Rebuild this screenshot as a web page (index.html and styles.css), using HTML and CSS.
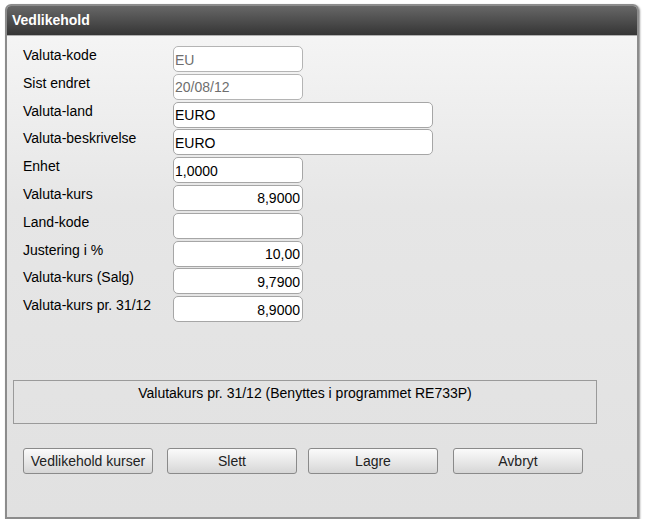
FILE: index.html
```html
<!DOCTYPE html>
<html lang="no">
<head>
<meta charset="utf-8">
<title>Vedlikehold</title>
<link rel="stylesheet" href="styles.css">
</head>
<body>
<div class="window">
  <div class="titlebar">Vedlikehold</div>
  <div class="content">
    <div class="form">
      <label class="lbl">Valuta-kode</label>
      <input class="fld disabled" type="text" value="EU" disabled>
      <label class="lbl">Sist endret</label>
      <input class="fld disabled" type="text" value="20/08/12" disabled>
      <label class="lbl">Valuta-land</label>
      <input class="fld wide" type="text" value="EURO">
      <label class="lbl">Valuta-beskrivelse</label>
      <input class="fld wide" type="text" value="EURO">
      <label class="lbl">Enhet</label>
      <input class="fld" type="text" value="1,0000">
      <label class="lbl">Valuta-kurs</label>
      <input class="fld num" type="text" value="8,9000">
      <label class="lbl">Land-kode</label>
      <input class="fld" type="text" value="">
      <label class="lbl">Justering i %</label>
      <input class="fld num" type="text" value="10,00">
      <label class="lbl">Valuta-kurs (Salg)</label>
      <input class="fld num" type="text" value="9,7900">
      <label class="lbl">Valuta-kurs pr. 31/12</label>
      <input class="fld num" type="text" value="8,9000">
    </div>
    <div class="info">Valutakurs pr. 31/12 (Benyttes i programmet RE733P)</div>
    <div class="buttons">
      <button class="btn b1">Vedlikehold kurser</button>
      <button class="btn b2">Slett</button>
      <button class="btn b3">Lagre</button>
      <button class="btn b4">Avbryt</button>
    </div>
  </div>
</div>
</body>
</html>
```

FILE: styles.css
```css
html, body {
  margin: 0;
  padding: 0;
  background: #ffffff;
}
body {
  font-family: "Liberation Sans", Arial, sans-serif;
  font-size: 14px;
  color: #111;
}
.window {
  box-sizing: border-box;
  margin: 4px 0 0 5px;
  width: 634px;
  height: 515px;
  border: 2px solid #8c8c8c;
  border-radius: 6px 6px 0 0;
  box-shadow: 1px 1px 2px rgba(0,0,0,0.45);
  display: flex;
  flex-direction: column;
  overflow: hidden;
  background: linear-gradient(#f7f7f7 0px, #e6e6e6 200px, #e1e1e1 100%);
}
.titlebar {
  height: 30px;
  flex: none;
  box-sizing: border-box;
  padding: 6px 0 0 5px;
  background: linear-gradient(#676767, #353535);
  border-bottom: 1px solid #b0b0b0;
  color: #ffffff;
  font-weight: bold;
  font-size: 14px;
  line-height: 16px;
}
.content {
  flex: 1;
  display: flex;
  flex-direction: column;
  padding: 10px 0 0 0;
}
.form {
  display: grid;
  grid-template-columns: 150px auto;
  justify-content: start;
  row-gap: 1.8px;
  padding-left: 16px;
}
.lbl {
  padding-top: 1px;
  line-height: 16px;
  height: 26px;
  box-sizing: border-box;
  color: #000;
}
.fld {
  box-sizing: border-box;
  width: 130px;
  height: 26px;
  margin: 0;
  padding: 1px 2px 0 1px;
  border: 1px solid #a6a6a6;
  border-radius: 5px;
  background: #ffffff;
  font-family: "Liberation Sans", Arial, sans-serif;
  font-size: 14px;
  color: #000;
  outline: none;
}
.fld.wide {
  width: 260px;
}
.fld.num {
  text-align: right;
}
.fld.disabled {
  color: #6e6e6e;
  background: #ffffff;
  border-color: #b4b4b4;
}
.info {
  margin: 58px 0 0 6px;
  width: 584px;
  height: 44px;
  box-sizing: border-box;
  border: 1px solid #9a9a9a;
  text-align: center;
  padding-top: 4px;
  line-height: 16px;
  color: #000;
}
.buttons {
  display: flex;
  margin: 24px 0 0 16px;
}
.btn {
  box-sizing: border-box;
  width: 130px;
  height: 26px;
  margin: 0;
  padding: 0;
  border: 1px solid #8a8a8a;
  border-radius: 3px;
  background: linear-gradient(#fbfbfb, #e9e9e9 50%, #d6d6d6);
  font-family: "Liberation Sans", Arial, sans-serif;
  font-size: 14px;
  color: #222;
}
.b2 { margin-left: 14px; }
.b3 { margin-left: 11px; }
.b4 { margin-left: 15px; }
```
